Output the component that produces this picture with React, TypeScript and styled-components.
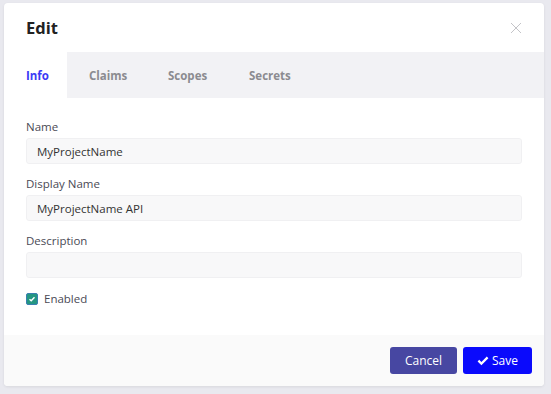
import React from "react";
import styled, { createGlobalStyle } from "styled-components";

const Global = createGlobalStyle`
  html, body { margin: 0; padding: 0; background: #e9e9ef; }
  body { font-family: "Open Sans", "Liberation Sans", sans-serif; }
  * { box-sizing: border-box; }
`;

const Page = styled.div`
  width: 551px;
  height: 394px;
  padding: 3px 7px 8px 4px;
  background: #e9e9ef;
`;

const Modal = styled.div`
  width: 540px;
  height: 383px;
  background: #fff;
  border-radius: 4px;
  box-shadow: 0 1px 3px rgba(0, 0, 0, 0.08);
  display: flex;
  flex-direction: column;
  overflow: hidden;
`;

const Header = styled.div`
  height: 49px;
  display: flex;
  align-items: center;
  justify-content: space-between;
  padding: 0 22px 0 22px;
`;

const Title = styled.h2`
  margin: 0;
  font-size: 16.5px;
  font-weight: 700;
  color: #222;
`;

const Close = styled.button`
  border: 0;
  background: none;
  padding: 0;
  width: 12px;
  height: 12px;
  display: flex;
  cursor: pointer;
`;

const Tabs = styled.div`
  height: 46px;
  background: #f2f2f5;
  display: flex;
`;

const Tab = styled.div<{ $active?: boolean; $w: number }>`
  width: ${(p) => p.$w}px;
  display: flex;
  align-items: center;
  padding-left: 22px;
  font-size: 11.5px;
  font-weight: 700;
  color: ${(p) => (p.$active ? "#3b3bf5" : "#8b8b90")};
  background: ${(p) => (p.$active ? "#fff" : "transparent")};
`;

const Body = styled.div`
  flex: 1;
  padding: 21px 22px 0 22px;
  display: flex;
  flex-direction: column;
`;

const Label = styled.label`
  display: block;
  font-size: 11.5px;
  color: #4a4a55;
  margin-bottom: 4px;
`;

const Field = styled.div`
  margin-bottom: 12px;
`;

const Input = styled.input`
  width: 496px;
  height: 26px;
  border: 1px solid #f0f0f2;
  border-radius: 3px;
  background: #f8f8f9;
  padding: 0 10px;
  font-family: inherit;
  font-size: 11.5px;
  color: #333;
  outline: none;
`;

const CheckRow = styled.div`
  display: flex;
  align-items: center;
  gap: 6px;
  margin-top: 1px;
  font-size: 11.5px;
  color: #4a4a55;
`;

const Box = styled.span`
  width: 12px;
  height: 12px;
  border-radius: 2px;
  background: #249682;
  border: 1px solid #3a7fb0;
  display: flex;
  align-items: center;
  justify-content: center;
`;

const Footer = styled.div`
  height: 51px;
  background: #fafafa;
  display: flex;
  align-items: center;
  justify-content: flex-end;
  gap: 6px;
  padding: 0 12px 0 0;
`;

const Button = styled.button<{ $primary?: boolean; $w: number }>`
  width: ${(p) => p.$w}px;
  height: 27px;
  border: 0;
  border-radius: 3px;
  background: ${(p) => (p.$primary ? "#0a0afc" : "#4747a2")};
  color: #fff;
  font-family: inherit;
  font-size: 12px;
  display: flex;
  align-items: center;
  justify-content: center;
  gap: 3px;
  cursor: pointer;
`;

export default function App() {
  return (
    <Page>
      <Global />
      <Modal>
        <Header>
          <Title>Edit</Title>
          <Close aria-label="close">
            <svg width="12" height="12" viewBox="0 0 12 12">
              <path d="M1 1L11 11M11 1L1 11" stroke="#c4c4c8" strokeWidth="1" />
            </svg>
          </Close>
        </Header>
        <Tabs>
          <Tab $active $w={63}>Info</Tab>
          <Tab $w={79}>Claims</Tab>
          <Tab $w={81}>Scopes</Tab>
          <Tab $w={90}>Secrets</Tab>
        </Tabs>
        <Body>
          <Field>
            <Label>Name</Label>
            <Input defaultValue="MyProjectName" />
          </Field>
          <Field>
            <Label>Display Name</Label>
            <Input defaultValue="MyProjectName API" />
          </Field>
          <Field>
            <Label>Description</Label>
            <Input defaultValue="" />
          </Field>
          <CheckRow>
            <Box>
              <svg width="8" height="8" viewBox="0 0 8 8">
                <path d="M1.5 4.2L3.2 5.8L6.5 2.3" stroke="#fff" strokeWidth="1.4" fill="none" />
              </svg>
            </Box>
            Enabled
          </CheckRow>
        </Body>
        <Footer>
          <Button $w={67}>Cancel</Button>
          <Button $primary $w={69}>
            <svg width="12" height="10" viewBox="0 0 12 10">
              <path d="M0.6 5.4L2.2 3.8L4.4 6L9.8 0.6L11.4 2.2L4.4 9.2Z" fill="#fff" />
            </svg>
            Save
          </Button>
        </Footer>
      </Modal>
    </Page>
  );
}
